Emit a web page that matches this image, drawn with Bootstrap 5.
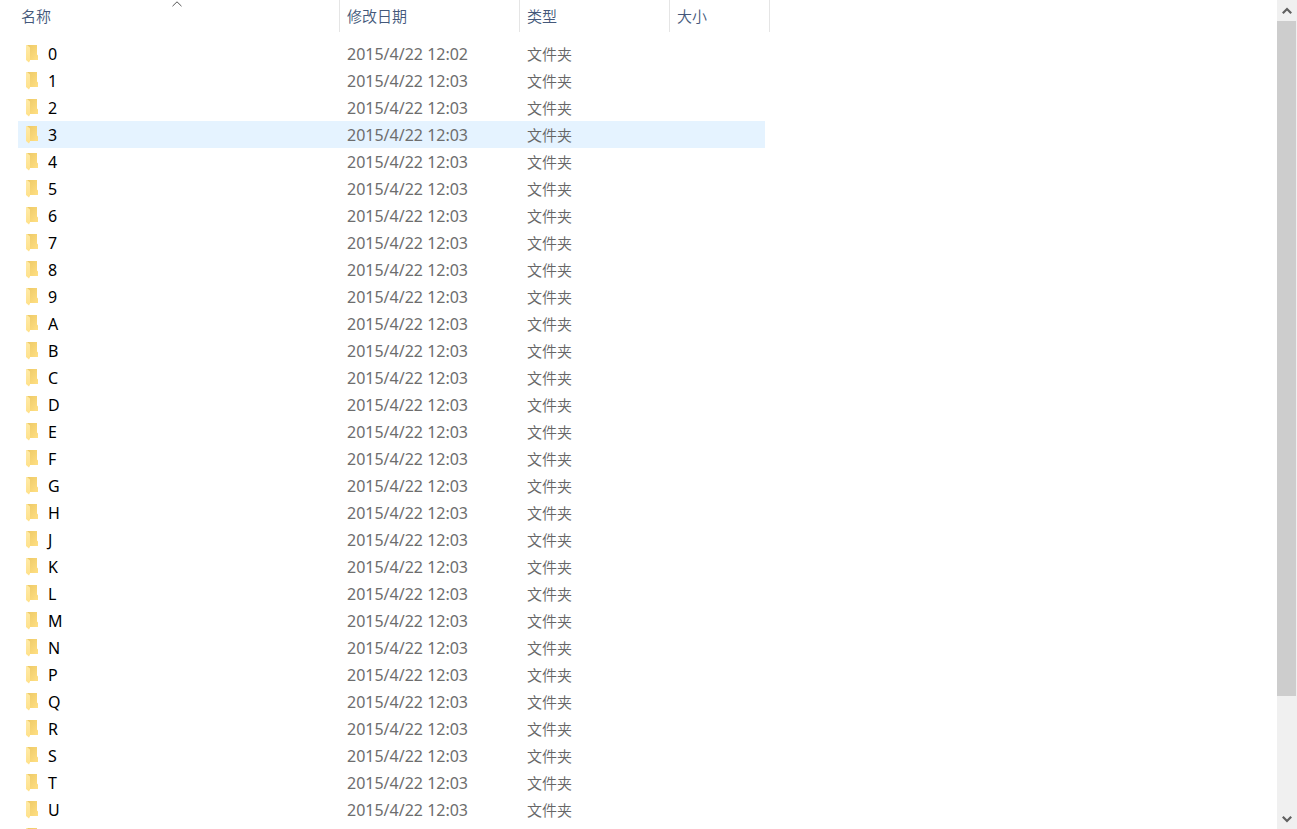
<!DOCTYPE html>
<html lang="zh-CN">
<head>
<meta charset="utf-8">
<meta name="viewport" content="width=device-width, initial-scale=1">
<title>文件夹</title>
<link href="https://cdn.jsdelivr.net/npm/bootstrap@5.3.0/dist/css/bootstrap.min.css" rel="stylesheet">
<style>
  body { font-family: "Noto Sans", "Noto Sans CJK SC", sans-serif; background: #fff; }
  .file-list { table-layout: fixed; width: 757px; margin-left: 13px; border-collapse: separate; border-spacing: 0; }
  .col-name { width: 327px; }
  .col-date { width: 180px; }
  .col-type { width: 150px; }
  .col-size { width: 100px; }
  .file-list th { height: 32px; padding: 0 0 2px 7px; border-right: 1px solid #e5e5e5; font-weight: 400; position: relative; }
  .file-list th:first-child { padding-left: 8px; }
  .sort-btn { font-size: 15px; line-height: 24px; font-weight: 350; color: #44587a; }
  .sort-btn:hover { color: #44587a; }
  .sort-mark { top: 1px; left: 159px; }
  .list-gap td { height: 8px; padding: 0; }
  .entry td { height: 27px; padding: 2px 0 0 7px; font-size: 16px; line-height: 25px; color: #6d6d6d; white-space: nowrap; background-clip: padding-box; }
  .entry td.kind { font-size: 15px; font-weight: 350; color: #666; }
  .entry td:first-child { border-left: 5px solid transparent; padding-left: 8px; color: #000; }
  .entry td:last-child { border-right: 5px solid transparent; }
  .entry.hovered td { background-color: #e5f3ff; }
  .entry svg { width: 14px; height: 18px; margin-top: 3px; }
  .entry-label { height: 25px; }
  .scroll-rail { width: 20px; background: #f0f0f0; }
  .scroll-step { height: 21px; }
  .scroll-thumb { background: #cdcdcd; flex: 675 0 0; margin-right: 1px; }
  .scroll-rest { flex: 112 0 0; }
</style>
</head>
<body>
<svg class="position-absolute" width="0" height="0" aria-hidden="true">
  <defs>
    <linearGradient id="back" x1="0" y1="0" x2="1" y2="1"><stop offset="0" stop-color="#edc966"/><stop offset="1" stop-color="#ffdf83"/></linearGradient>
    <linearGradient id="flap" x1="0" y1="0" x2="0" y2="1"><stop offset="0" stop-color="#ffeaa6"/><stop offset="1" stop-color="#ffe18a"/></linearGradient>
  </defs>
</svg>
<div class="d-flex vh-100 overflow-hidden">
  <main class="flex-grow-1 overflow-hidden">
    <table class="file-list">
      <colgroup><col class="col-name"><col class="col-date"><col class="col-type"><col class="col-size"></colgroup>
      <thead>
        <tr>
          <th scope="col" aria-sort="ascending"><button type="button" class="sort-btn btn border-0 p-0">名称</button><svg class="sort-mark position-absolute" width="10" height="6" viewBox="0 0 10 6" aria-hidden="true"><path d="M.5 5.200 5 .8l4.500 4.400" fill="none" stroke="#555"/></svg></th>
          <th scope="col"><button type="button" class="sort-btn btn border-0 p-0">修改日期</button></th>
          <th scope="col"><button type="button" class="sort-btn btn border-0 p-0">类型</button></th>
          <th scope="col"><button type="button" class="sort-btn btn border-0 p-0">大小</button></th>
        </tr>
      </thead>
      <tbody id="entries"><tr class="list-gap"><td colspan="4"></td></tr></tbody>
    </table>
  </main>
  <aside class="scroll-rail d-flex flex-column flex-shrink-0" aria-label="滚动条">
    <button type="button" class="scroll-step btn border-0 rounded-0 p-0 d-flex align-items-center justify-content-center" aria-label="向上"><svg width="10" height="8" viewBox="0 0 10 8"><path d="M.8 6.200 5 2l4.200 4.200" fill="none" stroke="#606060" stroke-width="2.200"/></svg></button>
    <div class="scroll-thumb"></div>
    <div class="scroll-rest"></div>
    <button type="button" class="scroll-step btn border-0 rounded-0 p-0 d-flex align-items-center justify-content-center" aria-label="向下"><svg width="10" height="8" viewBox="0 0 10 8"><path d="M.8 1.800 5 6l4.200-4.200" fill="none" stroke="#606060" stroke-width="2.200"/></svg></button>
  </aside>
</div>
<script src="https://cdn.jsdelivr.net/npm/bootstrap@5.3.0/dist/js/bootstrap.bundle.min.js"></script>
<script>
  const icon = '<svg viewBox="0 0 14 18" aria-hidden="true"><path d="M1 0h10v9.500l1 1V15H3z" fill="url(#back)"/><path d="M0 0h1l3 2.500V15.500L3 17.500 0 15z" fill="url(#flap)"/></svg>';
  const body = document.getElementById('entries');
  const addRow = (name, date, kind) => {
    const row = document.createElement('tr');
    row.className = name === '3' ? 'entry hovered' : 'entry';
    row.innerHTML = `<td><div class="entry-label d-flex align-items-start gap-2">${icon}<span>${name}</span></div></td><td>${date}</td><td class="kind">${kind}</td><td></td>`;
    body.append(row);
  };
  [...'0123456789ABCDEFGHJKLMNPQRSTU'].forEach((name, i) => addRow(name, `2015/4/22 12:0${i ? 3 : 2}`, '文件夹'));
  addRow('', '', '');
</script>
</body>
</html>
